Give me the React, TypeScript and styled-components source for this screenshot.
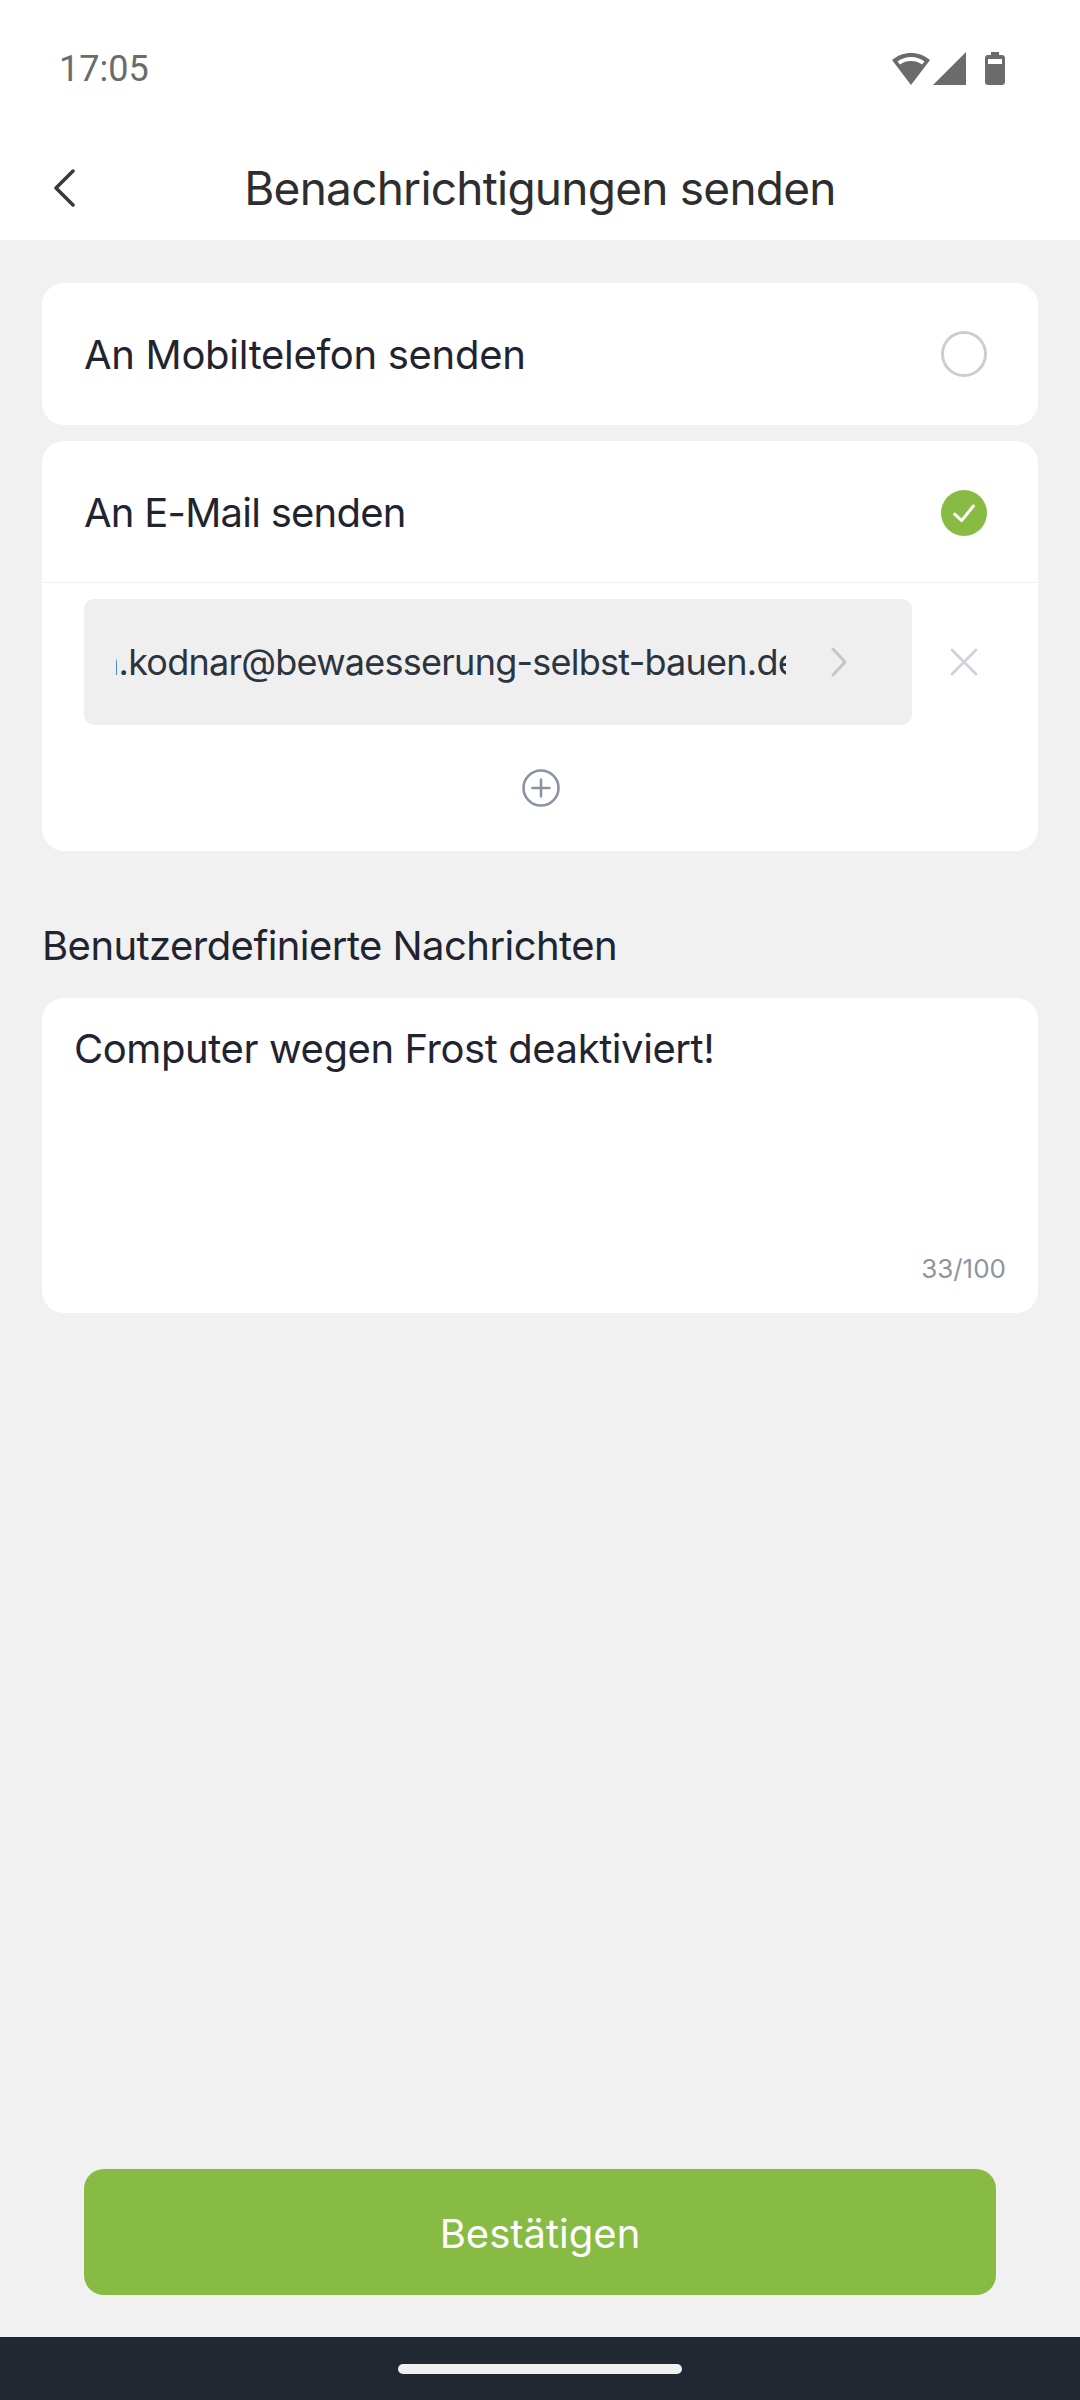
import styled, { createGlobalStyle } from "styled-components";

const GlobalStyle = createGlobalStyle`
  html, body {
    margin: 0;
    padding: 0;
    background: #f1f1f1;
    font-family: Inter, "Noto Sans", sans-serif;
  }
`;

function App() {
  return (
    <Page>
      <GlobalStyle />
      <TopArea>
        <StatusBar>
          <Clock>17:05</Clock>
          <StatusIcons>
            <svg width="38" height="32" viewBox="0 0 38 32">
              <path d="M19 0C12 0 5.500 2.500 0 7L19 32L38 7C32.500 2.500 26 0 19 0Z" fill="#6b6b6b" />
              <path
                d="M5.500 8.500C9.500 5.500 14 4 19 4C24 4 28.500 5.500 32.500 8.500L30 11.500C26.800 9 23 8 19 8C15 8 11.200 9 8 11.500Z"
                fill="#fff"
              />
            </svg>
            <svg width="33" height="33" viewBox="0 0 33 33">
              <path d="M33 0V33H0Z" fill="#6b6b6b" />
            </svg>
            <BatteryIcon width="20" height="33" viewBox="0 0 20 33">
              <path
                d="M6 0H14V3H17C18.700 3 20 4.300 20 6V30C20 31.700 18.700 33 17 33H3C1.300 33 0 31.700 0 30V6C0 4.300 1.300 3 3 3H6Z"
                fill="#6b6b6b"
              />
              <rect x="3" y="7" width="14" height="5" fill="#fff" />
            </BatteryIcon>
          </StatusIcons>
        </StatusBar>
        <Header>
          <BackIcon width="24" height="38" viewBox="0 0 24 38">
            <path d="M21 2L4 19L21 36" fill="none" stroke="#3a3a3a" strokeWidth="3.500" strokeLinecap="round" strokeLinejoin="round" />
          </BackIcon>
          <Title>Benachrichtigungen senden</Title>
        </Header>
      </TopArea>

      <Main>
        <Card>
          <OptionRow>
            <OptionLabel $tracking={-0.3}>An Mobiltelefon senden</OptionLabel>
            <RadioOff />
          </OptionRow>
        </Card>

        <Card>
          <OptionRow $divided>
            <OptionLabel $tracking={-0.75}>An E-Mail senden</OptionLabel>
            <RadioOn>
              <svg width="28" height="28" viewBox="0 0 24 24">
                <path d="M4 13L10 18.500L20 6" fill="none" stroke="#fff" strokeWidth="2.600" strokeLinecap="round" strokeLinejoin="round" />
              </svg>
            </RadioOn>
          </OptionRow>
          <EmailRow>
            <EmailBox>
              <EmailClip>
                <EmailText>n.kodnar@bewaesserung-selbst-bauen.de</EmailText>
              </EmailClip>
              <svg width="18" height="30" viewBox="0 0 18 30">
                <path d="M3 2L15 15L3 28" fill="none" stroke="#c4c6c9" strokeWidth="3" strokeLinecap="round" strokeLinejoin="round" />
              </svg>
            </EmailBox>
            <RemoveSlot>
              <svg width="28" height="28" viewBox="0 0 28 28">
                <path d="M2 2L26 26M26 2L2 26" stroke="#cfd2d8" strokeWidth="2.800" strokeLinecap="round" />
              </svg>
            </RemoveSlot>
          </EmailRow>
          <AddRow>
            <svg width="38" height="38" viewBox="0 0 38 38">
              <circle cx="19" cy="19" r="17.500" fill="none" stroke="#8b93a3" strokeWidth="2.600" />
              <path d="M19 10.500V27.500M10.500 19H27.500" stroke="#8b93a3" strokeWidth="2.600" strokeLinecap="round" />
            </svg>
          </AddRow>
        </Card>

        <SectionTitle>Benutzerdefinierte Nachrichten</SectionTitle>

        <MessageCard>
          <MessageText>Computer wegen Frost deaktiviert!</MessageText>
          <Counter>33/100</Counter>
        </MessageCard>

        <ConfirmButton>Bestätigen</ConfirmButton>
      </Main>

      <NavBar>
        <NavPill />
      </NavBar>
    </Page>
  );
}

const Page = styled.div`
  display: flex;
  flex-direction: column;
  width: 1080px;
  height: 2400px;
  overflow: hidden;
  background: #f1f1f1;
`;
const TopArea = styled.div`
  background: #fff;
`;
const StatusBar = styled.div`
  display: flex;
  align-items: center;
  justify-content: space-between;
  height: 136px;
  padding: 1px 75px 0 59px;
  box-sizing: border-box;
`;
const Clock = styled.span`
  font-family: Roboto, sans-serif;
  font-size: 36px;
  color: #6b6b6b;
`;
const StatusIcons = styled.div`
  display: flex;
  align-items: center;
  gap: 3px;
`;
const BatteryIcon = styled.svg`
  margin-left: 16px;
`;
const Header = styled.div`
  position: relative;
  display: flex;
  align-items: center;
  justify-content: center;
  height: 104px;
  box-sizing: border-box;
`;
const BackIcon = styled.svg`
  position: absolute;
  left: 52px;
  top: 33px;
`;
const Title = styled.h1`
  margin: 0;
  font-size: 46px;
  font-weight: 400;
  letter-spacing: -0.76px;
  color: #2e2e2e;
`;
const Main = styled.main`
  flex: 1;
  display: flex;
  flex-direction: column;
  padding: 43px 42px 42px;
  box-sizing: border-box;
`;
const Card = styled.section`
  margin-bottom: 16px;
  background: #fff;
  border-radius: 22px;
  overflow: hidden;
`;
const OptionRow = styled.div<{ $divided?: boolean }>`
  display: flex;
  align-items: center;
  justify-content: space-between;
  height: 142px;
  padding: ${(p) => (p.$divided ? "2px" : "0")} 51px 0 42px;
  box-sizing: border-box;
  border-bottom: ${(p) => (p.$divided ? "1px solid #f0f0f0" : "none")};
`;
const OptionLabel = styled.span<{ $tracking: number }>`
  font-size: 40px;
  letter-spacing: ${(p) => p.$tracking}px;
  color: #1f2430;
`;
const RadioOff = styled.span`
  width: 46px;
  height: 46px;
  border: 3px solid #cdcdcd;
  border-radius: 50%;
  box-sizing: border-box;
`;
const RadioOn = styled.span`
  display: flex;
  align-items: center;
  justify-content: center;
  width: 46px;
  height: 46px;
  border-radius: 50%;
  background: #88bb43;
`;
const EmailRow = styled.div`
  display: flex;
  align-items: center;
  padding: 16px 0 0 42px;
`;
const EmailBox = styled.div`
  display: flex;
  align-items: center;
  width: 828px;
  height: 126px;
  padding: 0 0 0 32px;
  box-sizing: border-box;
  background: #efefef;
  border-radius: 10px;
`;
const EmailClip = styled.div`
  width: 670px;
  margin-right: 44px;
  overflow: hidden;
  white-space: nowrap;
`;
const EmailText = styled.span`
  display: inline-block;
  margin-left: -18px;
  font-size: 36px;
  letter-spacing: -0.75px;
  color: #2c3440;
`;
const RemoveSlot = styled.div`
  display: flex;
  justify-content: center;
  width: 104px;
`;
const AddRow = styled.div`
  display: flex;
  justify-content: center;
  padding: 44px 0 44px 2px;
`;
const SectionTitle = styled.h2`
  margin: 54px 0 28px;
  font-size: 40px;
  font-weight: 400;
  letter-spacing: -0.55px;
  color: #1f2430;
`;
const MessageCard = styled.section`
  display: flex;
  flex-direction: column;
  justify-content: space-between;
  height: 315px;
  padding: 26px 32px 29px 32px;
  box-sizing: border-box;
  background: #fff;
  border-radius: 22px;
`;
const MessageText = styled.p`
  margin: 0;
  font-size: 40px;
  letter-spacing: -0.42px;
  color: #1f2430;
`;
const Counter = styled.span`
  align-self: flex-end;
  font-size: 26px;
  color: #8f95a0;
`;
const ConfirmButton = styled.button`
  margin: auto 42px 0;
  height: 126px;
  padding: 2px 0 0;
  border: none;
  border-radius: 20px;
  background: #88bb43;
  font-family: inherit;
  font-size: 40px;
  color: #fff;
`;
const NavBar = styled.div`
  display: flex;
  align-items: flex-start;
  justify-content: center;
  height: 63px;
  padding-top: 27px;
  box-sizing: border-box;
  background: #212832;
`;
const NavPill = styled.div`
  width: 284px;
  height: 10px;
  border-radius: 5px;
  background: #f0f0f0;
`;

export default App;
